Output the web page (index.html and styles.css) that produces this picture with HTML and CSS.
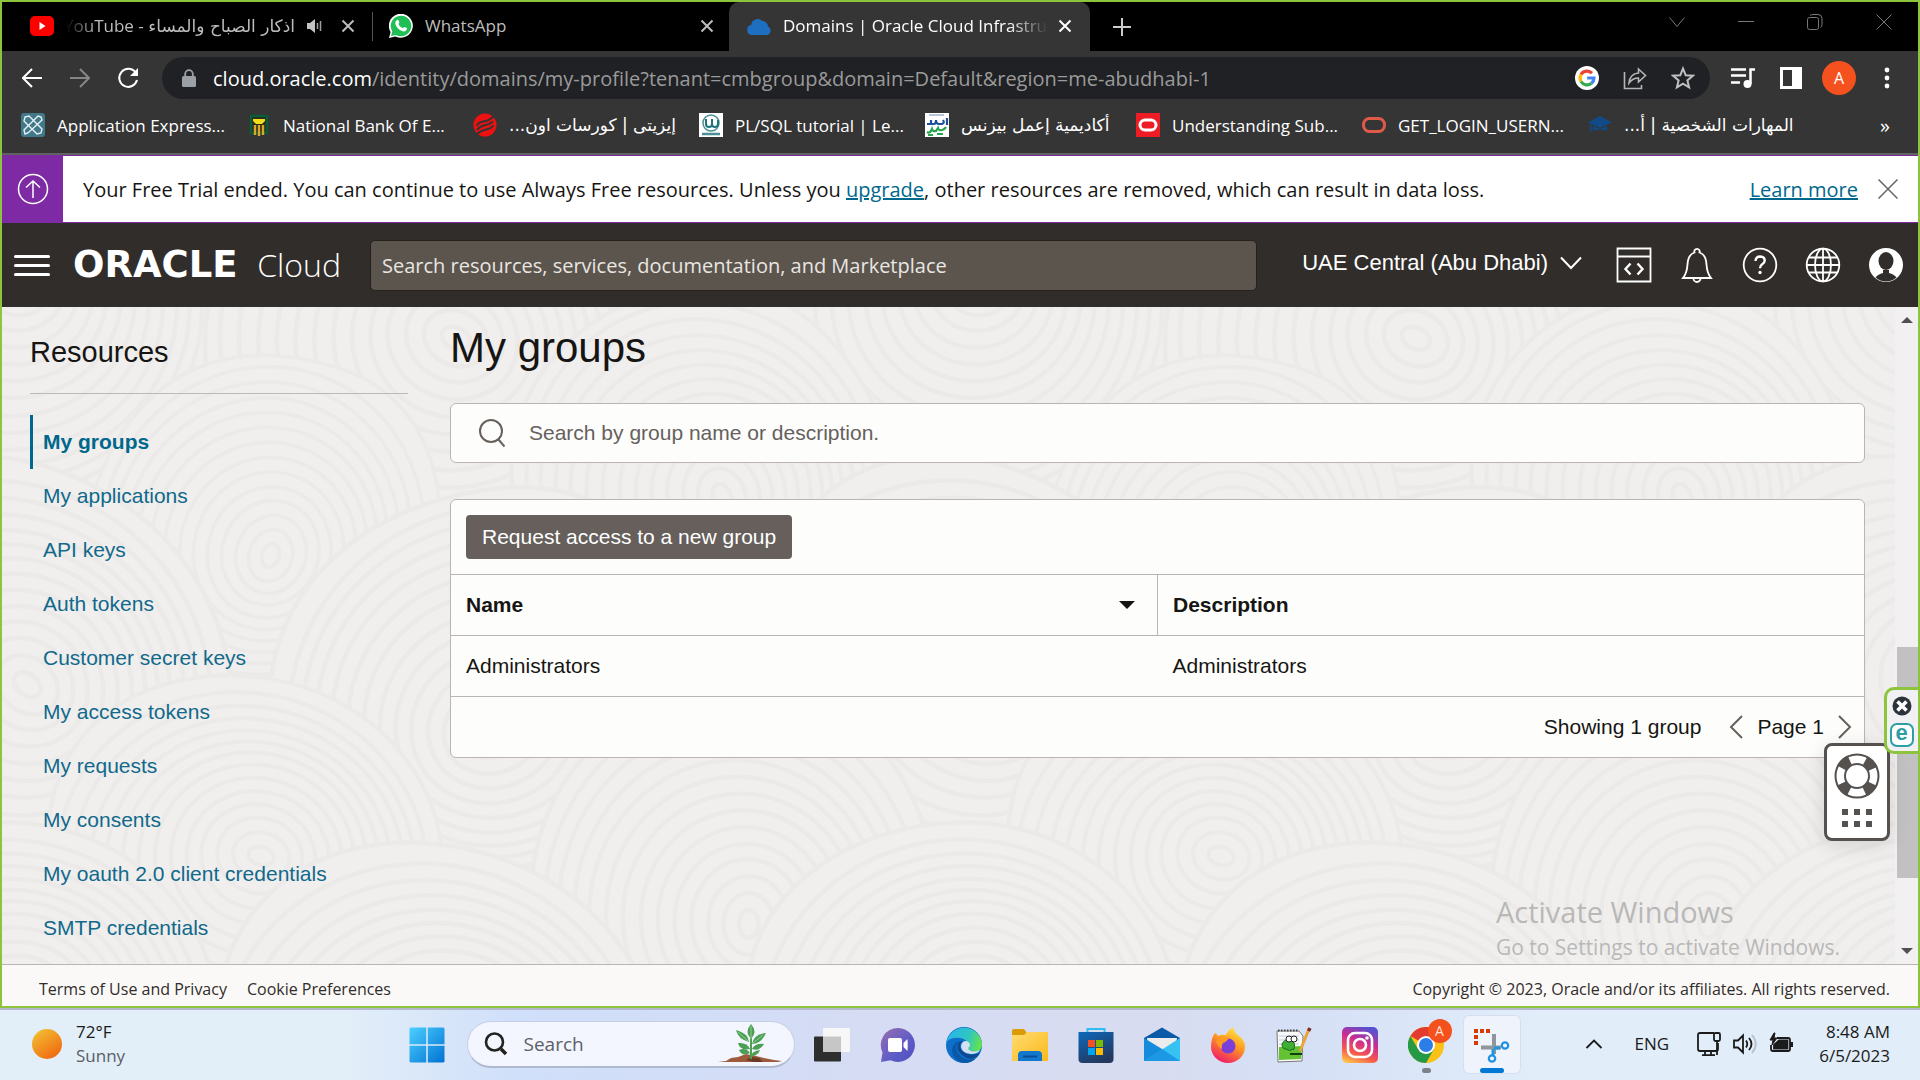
FILE: index.html
```html
<!DOCTYPE html>
<html lang="en">
<head>
<meta charset="utf-8">
<meta name="viewport" content="width=device-width, initial-scale=1">
<title>Domains | Oracle Cloud Infrastructure</title>
<link rel="stylesheet" href="styles.css">
</head>
<body>
<div class="browser">
  <div class="tab-strip">
    <div class="tab">
      <svg class="favicon" viewBox="0 0 24 24"><rect x="0" y="2" width="24" height="20" rx="5" fill="#f00"/><path d="M9.500 8l6 4-6 4z" fill="#fff"/></svg>
      <span class="tab-title tab-title-rtl" dir="rtl"><span class="arabic">اذكار الصباح والمساء</span> - YouTube</span>
      <svg class="tab-sound" viewBox="0 0 16 16"><path d="M0 5h3l5-4v14l-5-4H0z" fill="#c4c4c4"/><path d="M10.500 5v6M13.500 3v10" stroke="#a0a0a0" stroke-width="1.500"/></svg>
      <button class="tab-close" aria-label="Close tab"><svg viewBox="0 0 14 14"><path d="M1.500 1.500l11 11M12.500 1.500l-11 11"/></svg></button>
    </div>
    <div class="tab tab-second">
      <svg class="favicon" viewBox="0 0 24 24"><path d="M0 24l1.600-6A12 12 0 1 1 6.500 22.500z" fill="#fff"/><path d="M2 22l1.300-4.500A10.300 10.300 0 1 1 7 21z" fill="#1fbf55"/><path d="M8 6c1-.6 1.600 0 2.300 2.300.3.900-.9 1.300-.7 1.900.8 1.700 2.200 3 4 3.800.7.200 1.200-1.300 1.900-1.100l2.300 1.200c.8.500-.3 3.200-2.500 3.300C11 17.500 6.300 12.500 6.300 9c0-1.500.9-2.500 1.700-3z" fill="#fff"/></svg>
      <span class="tab-title">WhatsApp</span>
      <button class="tab-close" aria-label="Close tab"><svg viewBox="0 0 14 14"><path d="M1.500 1.500l11 11M12.500 1.500l-11 11"/></svg></button>
    </div>
    <div class="tab tab-active">
      <svg class="favicon" viewBox="0 0 24 24"><path d="M5 21a5 5 0 0 1-.8-9.900A6.500 6.500 0 0 1 15 6.800a6 6 0 0 1 6 5.700A4.500 4.500 0 0 1 20 21z" fill="#1f6fc0"/></svg>
      <span class="tab-title tab-title-fade">Domains | Oracle Cloud Infrastruc</span>
      <button class="tab-close" aria-label="Close tab"><svg viewBox="0 0 14 14"><path d="M1.500 1.500l11 11M12.500 1.500l-11 11"/></svg></button>
    </div>
    <button class="new-tab" aria-label="New tab"><svg viewBox="0 0 18 18"><path d="M9 0v18M0 9h18"/></svg></button>
    <div class="window-controls">
      <button aria-label="Search tabs"><svg viewBox="0 0 16 16"><path d="M.5 3.500l7.500 9 7.500-9"/></svg></button>
      <button aria-label="Minimize"><svg viewBox="0 0 16 16"><path d="M0 7.500h16"/></svg></button>
      <button aria-label="Restore"><svg viewBox="0 0 16 16"><rect x=".5" y="3.500" width="11" height="12" rx="2"/><path d="M3 1.500Q4 .5 6 .5h5q4 0 4 4v6q0 2-1.500 3"/></svg></button>
      <button aria-label="Close"><svg viewBox="0 0 16 16"><path d="M.5.5l15 15M15.500.5l-15 15"/></svg></button>
    </div>
  </div>

  <div class="toolbar">
    <button class="nav-button" aria-label="Back"><svg viewBox="0 0 20 20"><path d="M20 10H2M10 1l-9 9 9 9"/></svg></button>
    <button class="nav-button nav-disabled" aria-label="Forward"><svg viewBox="0 0 20 20"><path d="M0 10h18M10 1l9 9-9 9"/></svg></button>
    <button class="nav-button nav-reload" aria-label="Reload"><svg viewBox="0 0 22 22"><path d="M18.500 5.500A9 9 0 1 0 20 13"/><path d="M21 1v8h-8z" fill="#fff" stroke="none"/></svg></button>
    <div class="address">
      <svg class="lock" viewBox="0 0 14 18"><rect y="7" width="14" height="11" rx="1.500" fill="#9aa0a6"/><path d="M3.200 8V5a3.800 3.800 0 0 1 7.600 0v3" fill="none" stroke="#9aa0a6" stroke-width="1.800"/></svg>
      <div class="url"><span class="url-host">cloud.oracle.com</span>/identity/domains/my-profile?tenant=cmbgroup&amp;domain=Default&amp;region=me-abudhabi-1</div>
      <svg class="address-icon" viewBox="0 0 24 24"><circle cx="12" cy="12" r="12" fill="#fff"/><g fill="none" stroke-width="3.200"><path d="M6 8.500A7 7 0 0 1 17 7.200" stroke="#ea4335"/><path d="M6 15.500a7.500 7.500 0 0 1 0-7" stroke="#fbbc05"/><path d="M16.500 17.300A7 7 0 0 1 6 15.500" stroke="#34a853"/><path d="M12.200 12H19a7 7 0 0 1-2.500 5.300" stroke="#4285f4"/></g></svg>
      <svg class="address-icon" viewBox="0 0 24 24"><path d="M1.500 6v16.500h17V19" fill="none" stroke="#b5b5b5" stroke-width="1.600"/><path d="M6 17c.5-6 4-9.500 9.500-10V3l7 6.500-7 6.500v-4c-4 0-7 1.500-9.500 5z" fill="none" stroke="#b5b5b5" stroke-width="1.600"/></svg>
      <svg class="address-icon" viewBox="0 0 24 24"><path d="M12 2.500l2.700 6.700 7.200.5-5.500 4.700 1.700 7-6.100-3.800-6.100 3.800 1.700-7L2.100 9.700l7.200-.5z" fill="none" stroke="#c0c0c0" stroke-width="2"/></svg>
    </div>
    <div class="toolbar-actions">
      <button aria-label="Media controls"><svg viewBox="0 0 24 24"><path d="M0 3.500h15M0 9.500h15M0 16.500h9M19.500 18V3.500H24" fill="none" stroke="#fff" stroke-width="2.500"/><circle cx="16.500" cy="18" r="4" fill="#fff"/></svg></button>
      <button aria-label="Side panel"><svg viewBox="0 0 24 24"><path fill-rule="evenodd" d="M1 1h22v22H1zM4 4v16h9V4z" fill="#fff"/></svg></button>
      <button class="profile" aria-label="Profile">A</button>
      <button aria-label="Menu"><svg viewBox="0 0 24 24" fill="#fff"><circle cx="12" cy="4" r="2.400"/><circle cx="12" cy="12" r="2.400"/><circle cx="12" cy="20" r="2.400"/></svg></button>
    </div>
  </div>

  <nav class="bookmarks" aria-label="Bookmarks">
    <a href="#"><svg viewBox="0 0 24 24"><rect width="24" height="24" rx="3" fill="#41788a"/><g fill="none" stroke="#e8f1f3" stroke-width="1.400"><path d="M4 4l4-1 13 13-1 4-4 1L3 8z"/><path d="M20 4l-3-1L3 17l1 4 3-1L21 7z"/></g></svg><span>Application Express...</span></a>
    <a href="#"><svg viewBox="0 0 24 24"><rect x="4" y="3" width="16" height="17" fill="#2d2d1c" stroke="#0a5b37" stroke-width="2.500"/><path d="M6 6h12v2l-3 3H9L6 8z" fill="#f2dc1b"/><path d="M8 12v10M12 12v11M16 12v10" stroke="#dba72b" stroke-width="2.400"/></svg><span>National Bank Of E...</span></a>
    <a href="#"><svg viewBox="0 0 24 24"><circle cx="12" cy="12" r="11.500" fill="#ed1111"/><path d="M21 3Q16 8 10 8.500 4 10 4 13M20 8.500Q16 12 11 12.500 6 14 4 17M20 12Q20 15 13 16.500 7 18 4 21" fill="none" stroke="#343434" stroke-width="2"/></svg><span class="arabic" dir="rtl">إيزيتى | كورسات اون...</span></a>
    <a href="#"><svg viewBox="0 0 24 24"><rect width="24" height="24" fill="#fff"/><circle cx="12" cy="10" r="8" fill="none" stroke="#4a8f95" stroke-width="1.500"/><path d="M7 6v5q0 3 3 3t3-3V6v5q0 3 3 3t3-3V7" fill="none" stroke="#22747c" stroke-width="2"/><path d="M3 21h18" stroke="#4a8f95" stroke-width="2.500"/></svg><span>PL/SQL tutorial | Le...</span></a>
    <a class="bookmark-short" href="#"><svg viewBox="0 0 24 24"><rect width="24" height="24" fill="#fff"/><path d="M4 2h15" stroke="#9cb3cf" stroke-width="1.500"/><path d="M2 11h7q2 0 2-4 0 4 3 4h3q3-1 1-4M22 5v7M6 7v3" fill="none" stroke="#1d4f9c" stroke-width="2.200"/><path d="M2 19q3 2 5-3 1 3 4 2l2-3q1 3 4 2t4-3M3 22h5M12 21h6" fill="none" stroke="#25a34f" stroke-width="2.200"/></svg><span class="arabic" dir="rtl">أكاديمية إعمل بيزنس</span></a>
    <a href="#"><svg viewBox="0 0 24 24"><rect width="24" height="24" fill="#ee1c25"/><rect x="4" y="7" width="16" height="10" rx="5" fill="none" stroke="#fff" stroke-width="3"/></svg><span>Understanding Sub...</span></a>
    <a href="#"><svg viewBox="0 0 24 24"><rect x="1.500" y="5.500" width="21" height="13" rx="6" fill="none" stroke="#e05a4a" stroke-width="3"/></svg><span>GET_LOGIN_USERN...</span></a>
    <a href="#"><svg viewBox="0 0 24 24" fill="#114a86"><path d="M12 3L0 9.500 12 15l12-5.500z"/><path d="M5 13v5q7-3 14 0v-5l-7 3zM2 11v8h1.500v-8z"/></svg><span class="arabic" dir="rtl">المهارات الشخصية | أ...</span></a>
    <button class="bookmarks-more" aria-label="More bookmarks">»</button>
  </nav>

  <div class="banner">
    <div class="banner-mark"><svg viewBox="0 0 32 32"><circle cx="16" cy="16" r="14.500"/><path d="M16 25V8M9 14.500L16 8l7 6.500"/></svg></div>
    <p>Your Free Trial ended. You can continue to use Always Free resources. Unless you <a href="#">upgrade</a>, other resources are removed, which can result in data loss.</p>
    <a class="banner-more" href="#">Learn more</a>
    <button class="banner-close" aria-label="Dismiss"><svg viewBox="0 0 20 20"><path d="M.5.5l19 19M19.500.5l-19 19"/></svg></button>
  </div>

  <header class="cloud-header">
    <button class="menu-button" aria-label="Navigation menu"><i></i><i></i><i></i></button>
    <a class="logo" href="#"><b>ORACLE</b><span>Cloud</span></a>
    <input class="global-search" type="search" aria-label="Search resources" placeholder="Search resources, services, documentation, and Marketplace">
    <button class="region">UAE Central (Abu Dhabi)<svg viewBox="0 0 22 14"><path d="M1 1.500l10 10.500L21 1.500"/></svg></button>
    <div class="header-icons">
      <button aria-label="Developer tools"><svg viewBox="0 0 36 36"><path d="M1.500 1.500h33v33h-33zM1.500 9.500h33"/><path d="M14.500 16.500L9.500 22l5 5.500M21.500 16.500l5 5.500-5 5.500" stroke-width="2.400"/></svg></button>
      <button aria-label="Announcements"><svg viewBox="0 0 36 36"><path d="M4 31q4-5 4.500-13.500Q9 7.500 15.500 5.500a2.700 2.700 0 1 1 5 0q6.500 2 7 12Q28 26 32 31zM14.500 31.500a3.500 3.500 0 0 0 7 0"/></svg></button>
      <button aria-label="Help"><svg viewBox="0 0 36 36"><circle cx="18" cy="18" r="16.300"/><path d="M13.500 14q.3-4.500 4.700-4.500 4.500.2 4.500 4 0 2.300-2.500 3.800-2.200 1.300-2.200 4" stroke-width="2.400"/><circle cx="18" cy="25.500" r="1.700" fill="#fff" stroke="none"/></svg></button>
      <button aria-label="Language"><svg viewBox="0 0 36 36"><circle cx="18" cy="18" r="16.300"/><ellipse cx="18" cy="18" rx="8" ry="16.300"/><path d="M18 2v32M2 18h32M4 10.500h28M4 25.500h28"/></svg></button>
      <button aria-label="Account"><svg viewBox="0 0 36 36"><circle cx="18" cy="18" r="17" fill="#fff" stroke="none"/><ellipse cx="18" cy="14" rx="7.500" ry="9" fill="#312d2a" stroke="none"/><path d="M15 23v3q-5 1-7.500 4.500 4.500 4 10.500 4t10.500-4Q26 27 21 26v-3z" fill="#312d2a" stroke="none"/></svg></button>
    </div>
  </header>

  <div class="viewport">
    <svg class="backdrop" aria-hidden="true">
      <defs>
        <g id="swirl" fill="none" stroke="#ebeae9" stroke-width="3">
          <path fill="#f0efee" d="M-154-10C-160-100-70-150 10-146S160-80 154 10 80 150-10 144-150 80-154-10z"/>
          <ellipse rx="143" ry="134"/><ellipse cx="2" rx="132" ry="124"/><ellipse cx="4" cy="-1" rx="121" ry="114"/><ellipse cx="5" cy="-2" rx="110" ry="104"/><ellipse cx="6" cy="-4" rx="99" ry="94"/><ellipse cx="7" cy="-6" rx="88" ry="84"/><ellipse cx="8" cy="-8" rx="77" ry="73"/><ellipse cx="9" cy="-9" rx="66" ry="62"/><ellipse cx="10" cy="-10" rx="55" ry="51"/><ellipse cx="10" cy="-11" rx="44" ry="40"/><ellipse cx="11" cy="-12" rx="33" ry="29"/><ellipse cx="12" cy="-12" rx="22" ry="18"/><ellipse cx="12" cy="-12" rx="10" ry="7"/>
        </g>
        <pattern id="topography" width="960" height="720" patternUnits="userSpaceOnUse">
          <rect width="960" height="720" fill="#f0efee"/>
          <use href="#swirl" transform="translate(0 0) scale(1.400)"/><use href="#swirl" transform="translate(960 0) scale(1.400)"/>
          <use href="#swirl" transform="translate(430 40) rotate(25) scale(1.500)"/><use href="#swirl" transform="translate(700 180) rotate(70) scale(1.300)"/>
          <use href="#swirl" transform="translate(260 230) rotate(110) scale(1.200)"/>
          <use href="#swirl" transform="translate(0 380) rotate(40) scale(1.500)"/><use href="#swirl" transform="translate(960 380) rotate(40) scale(1.500)"/>
          <use href="#swirl" transform="translate(500 400) rotate(160) scale(1.500)"/>
          <use href="#swirl" transform="translate(240 560) rotate(15) scale(1.300)"/><use href="#swirl" transform="translate(730 600) rotate(90) scale(1.400)"/>
          <use href="#swirl" transform="translate(0 720) scale(1.400)"/><use href="#swirl" transform="translate(960 720) scale(1.400)"/>
          <use href="#swirl" transform="translate(430 760) rotate(25) scale(1.500)"/>
        </pattern>
      </defs>
      <rect width="100%" height="100%" fill="url(#topography)"/>
    </svg>
    <aside class="sidebar">
      <h2>Resources</h2>
      <nav aria-label="Resources">
        <a class="current" href="#">My groups</a>
        <a href="#">My applications</a>
        <a href="#">API keys</a>
        <a href="#">Auth tokens</a>
        <a href="#">Customer secret keys</a>
        <a href="#">My access tokens</a>
        <a href="#">My requests</a>
        <a href="#">My consents</a>
        <a href="#">My oauth 2.0 client credentials</a>
        <a href="#">SMTP credentials</a>
      </nav>
    </aside>
    <main class="content">
      <h1>My groups</h1>
      <label class="group-search">
        <svg viewBox="0 0 26 32"><circle cx="12" cy="14" r="11"/><path d="M19.500 22.500l6 7"/></svg>
        <input type="search" aria-label="Search groups" placeholder="Search by group name or description.">
      </label>
      <section class="panel">
        <div class="panel-actions"><button class="request-button">Request access to a new group</button></div>
        <table>
          <thead><tr><th scope="col"><div class="sortable">Name<i class="sort-arrow"></i></div></th><th scope="col">Description</th></tr></thead>
          <tbody><tr><td>Administrators</td><td>Administrators</td></tr></tbody>
        </table>
        <div class="pager">
          <span>Showing 1 group</span>
          <div class="pager-nav">
            <button aria-label="Previous page"><svg viewBox="0 0 14 24"><path d="M13 1L2 12l11 11"/></svg></button>
            <span>Page 1</span>
            <button aria-label="Next page"><svg viewBox="0 0 14 24"><path d="M1 1l11 11L1 23"/></svg></button>
          </div>
        </div>
      </section>
    </main>
    <div class="scrollbar" aria-hidden="true"><i class="arrow-up"></i><div class="track"><div class="thumb"></div></div><i class="arrow-down"></i></div>
    <div class="watermark"><strong>Activate Windows</strong><span>Go to Settings to activate Windows.</span></div>
    <button class="support" aria-label="Support">
      <svg viewBox="0 0 46 46"><circle cx="23" cy="23" r="21.500" fill="#fff" stroke="#55514e" stroke-width="2"/><circle cx="23" cy="23" r="17" fill="none" stroke="#55514e" stroke-width="11" stroke-dasharray="11 15.700" stroke-dashoffset="-7.850"/><circle cx="23" cy="23" r="12" fill="#fff" stroke="#55514e" stroke-width="2"/></svg>
      <svg class="grip" viewBox="0 0 30 18" fill="#55514e"><path d="M0 0h6v6H0zM12 0h6v6h-6zM24 0h6v6h-6zM0 12h6v6H0zM12 12h6v6h-6zM24 12h6v6h-6z"/></svg>
    </button>
    <div class="edge-widget">
      <svg viewBox="0 0 24 24"><circle cx="12" cy="12" r="9.500" fill="#2d333b"/><path d="M7.500 7.500l9 9M16.500 7.500l-9 9" stroke="#fff" stroke-width="3.600"/></svg>
      <span class="edge-badge">e</span>
    </div>
  </div>

  <footer class="page-footer">
    <a href="#">Terms of Use and Privacy</a>
    <a href="#">Cookie Preferences</a>
    <span>Copyright © 2023, Oracle and/or its affiliates. All rights reserved.</span>
  </footer>
</div>

<div class="taskbar">
  <div class="weather">
    <svg viewBox="0 0 30 30"><defs><linearGradient id="sun" x1="0" y1="0" x2=".7" y2="1"><stop offset="0" stop-color="#f3c737"/><stop offset="1" stop-color="#f06a10"/></linearGradient></defs><circle cx="15" cy="15" r="15" fill="url(#sun)"/></svg>
    <div><span>72°F</span><span class="weather-note">Sunny</span></div>
  </div>
  <div class="apps">
    <button class="app" aria-label="Start"><svg viewBox="0 0 36 36"><defs><linearGradient id="win" x1="0" y1="0" x2="1" y2="1"><stop offset="0" stop-color="#4cd0ff"/><stop offset="1" stop-color="#0072d3"/></linearGradient></defs><path d="M1.500.5h15.700v16.700H.5V1.500zM18.800.5h15.700l1 1v15.700H18.800zM.5 18.800h16.700v16.700H1.500l-1-1zM18.800 18.800h16.700v15.700l-1 1H18.800z" fill="url(#win)"/></svg></button>
    <label class="task-search">
      <svg class="task-glass" viewBox="0 0 24 24"><circle cx="10.500" cy="10" r="8.500"/><path d="M17 17l5 5" stroke-width="3.600"/></svg>
      <input type="search" aria-label="Search Windows" placeholder="Search">
      <svg class="plant" viewBox="0 0 66 42"><path d="M1 39l8-1 5-3 7-1 8-3 10 2 8 2 10 2 8 1-4 1z" fill="#9b5b3c"/><path d="M34 34l8 1 4 4h-9l-8-2z" fill="#6b3a24"/><path d="M34 36V8" stroke="#4f9e52" stroke-width="2"/><g fill="#4c9f54"><path d="M34 1q-7 8 0 15 7-7 0-15z"/><path d="M19 7q2 9 13 12-1-9-13-12z"/><path d="M49 10q-12 1-14 11 9 0 14-11z"/><path d="M21 20q2 8 12 6-3-7-12-6z"/><path d="M47 21q-9-1-12 5 7 3 12-5zM22 27q3 7 11 3-4-6-11-3zM43 27q-8 1-9 6 7 0 9-6z"/></g><path d="M34 3v13M21 9l10 9M46 12L36 20" stroke="#8fcf8a"/></svg>
    </label>
    <button class="app" aria-label="Task view"><svg viewBox="0 0 36 36"><rect y="9.500" width="27" height="25" rx="1" fill="#2f2e2e"/><rect x="9" y="1" width="27" height="24" rx="1" fill="#f7f7f7"/><path d="M9 9.500h18V25H9z" fill="#c6c6c6"/></svg></button>
    <button class="app" aria-label="Chat"><svg viewBox="0 0 36 36"><defs><linearGradient id="chat" x1="0" y1="0" x2="1" y2="1"><stop offset="0" stop-color="#9a6fae"/><stop offset=".6" stop-color="#5d5bc8"/><stop offset="1" stop-color="#4f50bd"/></linearGradient></defs><path d="M18 1a17 17 0 1 1-7.500 32.300L1 35l1.500-9.500A17 17 0 0 1 18 1z" fill="url(#chat)"/><rect x="8" y="11" width="14" height="14" rx="2" fill="#fff"/><path d="M23.500 16l4-4q.5 6 0 12l-4-4z" fill="#fff"/></svg></button>
    <button class="app" aria-label="Edge"><svg viewBox="0 0 36 36"><defs><linearGradient id="edge" x1="0" y1=".3" x2="1" y2=".5"><stop offset="0" stop-color="#2ab4ea"/><stop offset=".6" stop-color="#2fc6c3"/><stop offset="1" stop-color="#66e34b"/></linearGradient></defs><circle cx="18" cy="18" r="18" fill="#0c6fca"/><path d="M.5 15A18 18 0 0 1 36 17q0 7-7 8-8 .5-8-3 2-2 1.500-4.500Q21 12 14 11 5 10 .5 15z" fill="url(#edge)"/><path d="M13 14q-5 5-1 12 6 9 17 6-4 4-11 4Q6 33 6 22q2-7 7-8z" fill="#0a58a8"/><path d="M17 14q-6 5 0 11 7 5 17 1-7 9-15 4Q9 24 12 16q2-2 5-2z" fill="#0d4891"/><path d="M19 14q5 0 5 5-3 2-1 4 4 3 11 0-2 4-9 4-9-1-10-7 0-5 4-6z" fill="#d6dff3"/></svg></button>
    <button class="app" aria-label="File Explorer"><svg viewBox="0 0 36 36"><defs><linearGradient id="folder" x1="0" y1="0" x2="1" y2="1"><stop offset="0" stop-color="#ffdc72"/><stop offset="1" stop-color="#fbb91b"/></linearGradient></defs><path d="M0 4q0-2 2-2h10l3 4v4H0z" fill="#dc9a06"/><path d="M0 8h12l3-3h21v29H0z" fill="url(#folder)"/><path d="M6 34v-6q0-4 4-4h16q4 0 4 4v6z" fill="#1277cf"/><path d="M11 29.500h14" stroke="#084e93" stroke-width="2"/></svg></button>
    <button class="app" aria-label="Microsoft Store"><svg viewBox="0 0 36 36"><defs><linearGradient id="store" x1="0" y1="0" x2=".5" y2="1"><stop offset="0" stop-color="#0c69bd"/><stop offset="1" stop-color="#24395f"/></linearGradient></defs><path d="M9.500 7V2h17v5" fill="none" stroke="#2ebdf0" stroke-width="2"/><path d="M.5 5h35v27q0 4-4 4h-27q-4 0-4-4z" fill="url(#store)"/><path d="M10 13h7v7h-7z" fill="#f25022"/><path d="M18 13h7v7h-7z" fill="#7fba00"/><path d="M10 21h7v7h-7z" fill="#00a4ef"/><path d="M18 21h7v7h-7z" fill="#ffb900"/></svg></button>
    <button class="app" aria-label="Mail"><svg viewBox="0 0 36 36"><path d="M0 11L18 .500 36 11v5H0z" fill="#0b5aa8"/><path d="M3 11h30l-1 7-14 9L4 18z" fill="#ececec"/><path d="M0 11l18 11v12H0z" fill="#168bdc"/><path d="M36 11L0 34h36z" fill="#36c2f3"/><path d="M18 22l18 12H0z" fill="#1d98e4"/></svg></button>
    <button class="app" aria-label="Firefox"><svg viewBox="0 0 36 36"><defs><linearGradient id="fox" x1=".8" y1="0" x2=".3" y2="1"><stop offset="0" stop-color="#fff04a"/><stop offset=".45" stop-color="#ff9a1f"/><stop offset="1" stop-color="#f0186b"/></linearGradient></defs><path d="M5 6q2 1 3 3 4-2 8-1Q18 3 23 0q1 5 5 8 7 5 7 12A17 16 0 0 1 1 20q0-9 4-14z" fill="url(#fox)"/><circle cx="18" cy="19" r="7.500" fill="#7a3fd8"/><path d="M6 14q5-4 9-3l4-1q-1 4-6 6-2 3-1 6-5-3-6-8z" fill="#ff9a22"/></svg></button>
    <button class="app" aria-label="Notepad++"><svg viewBox="0 0 36 36"><path d="M1 4h22l4 5-1 25-24 1z" fill="#fafafa" stroke="#777"/><path d="M2 3.500h21" stroke="#444" stroke-width="2" stroke-dasharray="1.500 1.500"/><path d="M3 9h20M3 13h20M3 17h20" stroke="#bcd"/><path d="M3 20l23-1-1 13-22 1z" fill="#62c233"/><path d="M6 17q3-6 9-4 5 3 3 9-5 3-8 0-4 0-4-5z" fill="#3fae34" stroke="#176b19"/><circle cx="13" cy="12" r="3" fill="#fff" stroke="#222"/><circle cx="18" cy="12" r="3" fill="#fff" stroke="#222"/><path d="M14 27h12" stroke="#143d12" stroke-width="2"/><path d="M33 2l-9 22" stroke="#e9a43a" stroke-width="3"/><path d="M34 1l-1.500 3" stroke="#7a2f27" stroke-width="3.500"/></svg></button>
    <button class="app" aria-label="Instagram"><svg viewBox="0 0 36 36"><defs><linearGradient id="insta" x1=".2" y1="1" x2=".6" y2="0"><stop offset="0" stop-color="#ffc14a"/><stop offset=".3" stop-color="#f6584c"/><stop offset=".65" stop-color="#cb2c93"/><stop offset="1" stop-color="#5a4fce"/></linearGradient></defs><rect width="36" height="36" rx="5" fill="url(#insta)"/><g fill="none" stroke="#fff" stroke-width="2.600"><rect x="6" y="6" width="24" height="24" rx="7"/><circle cx="18" cy="18" r="6"/></g><circle cx="25" cy="11" r="1.800" fill="#fff"/></svg></button>
    <button class="app app-running" aria-label="Chrome"><svg viewBox="0 0 36 36"><circle cx="18" cy="18" r="18" fill="#fbc116"/><path d="M18 18L2.400 9A18 18 0 0 1 33.600 9z" fill="#e33b2e"/><path d="M2.400 9A18 18 0 0 0 18 36l7.800-13.500L10 22z" fill="#249a46"/><circle cx="18" cy="18" r="9" fill="#fff"/><circle cx="18" cy="18" r="7" fill="#2d7de9"/></svg><span class="app-badge">A</span></button>
    <button class="app app-current" aria-label="Snipping Tool"><svg viewBox="0 0 36 36"><path d="M20 7v20M7 20.500h20" fill="none" stroke="#8f969c" stroke-width="4"/><path d="M2 18V4h16" fill="none" stroke="#d83b01" stroke-width="4" stroke-dasharray="4 2"/><path d="M19 22v6M20 21h6" stroke="#2196e0" stroke-width="3"/><circle cx="18" cy="31.500" r="3.200" fill="none" stroke="#1d93df" stroke-width="2.200"/><circle cx="31" cy="18.500" r="3.200" fill="none" stroke="#1d93df" stroke-width="2.200"/></svg></button>
  </div>
  <div class="tray">
    <button aria-label="Hidden icons"><svg class="tray-chevron" viewBox="0 0 18 12"><path d="M1.500 10L9 2.500 16.500 10"/></svg></button>
    <span class="tray-language">ENG</span>
    <svg class="tray-icon" viewBox="0 0 24 24"><path d="M17 1H3Q1 1 1 3v14q0 2 2 2h16q2 0 2-2v-6M8 19v4M14 19v4M5 23.200h13"/><rect x="17" y="1" width="6" height="8" rx="1.500"/><path d="M20 9v14"/></svg>
    <svg class="tray-icon" viewBox="0 0 24 24"><path d="M1 8.500v7h4l5 5v-17l-5 5z"/><path d="M13 8.500q2.500 3.500 0 7M16 6q5 6 0 12"/><path d="M19 3q7.500 9 0 18" stroke="#b9c1ca"/></svg>
    <svg class="tray-icon" viewBox="0 0 24 24"><path d="M8 6h11q2 0 2 2v9q0 2-2 2H4q-2 0-2-2v-4"/><path d="M10 8.500h8.500v8H5V13z" fill="#1b1b1b"/><path d="M22.500 10v5" stroke-width="3"/><path d="M5 1L1 8h3l-1 5 5-7H5l1-5z" fill="#1b1b1b" stroke-width="1"/></svg>
    <div class="clock"><span>8:48 AM</span><span>6/5/2023</span></div>
  </div>
</div>
</body>
</html>
```
FILE: styles.css
```css
:root {
  --ui: "Open Sans", "Noto Sans", "DejaVu Sans", sans-serif;
  --page: "Liberation Sans", Arial, sans-serif;
  --green: #8cc43d;
  --line: #bab5af;
  --link: #00688c;
}

* { box-sizing: border-box; }

body {
  margin: 0;
  min-height: 100vh;
  display: flex;
  flex-direction: column;
  font-family: var(--ui);
  color: #161513;
}

button {
  padding: 0;
  border: 0;
  background: none;
  color: inherit;
  font: inherit;
  display: flex;
  align-items: center;
  justify-content: center;
}

input {
  border: 0;
  background: none;
  outline: 0;
  font: inherit;
  min-width: 0;
}

a { text-decoration: none; color: inherit; }
svg { display: block; flex: none; }
.arabic { font-family: "DejaVu Sans", sans-serif; font-size: 17px; }

.browser {
  flex: 1;
  display: flex;
  flex-direction: column;
  border: 2px solid var(--green);
  background: #353535;
}

/* Tabs */
.tab-strip {
  height: 49px;
  display: flex;
  align-items: stretch;
  background: #000;
  color: #bdbdbd;
  font-size: 17px;
}
.tab {
  width: 370px;
  display: flex;
  align-items: center;
  padding: 0 17px 2px 28px;
}
.tab-second {
  width: 357px;
  padding: 0 15px 2px 17px;
  position: relative;
}
.tab-second::before {
  content: "";
  position: absolute;
  left: 0;
  top: 10px;
  bottom: 10px;
  width: 1px;
  background: #555;
}
.tab-active {
  width: 361px;
  padding: 0 18px 2px;
  border-radius: 10px 10px 0 0;
  background: #353535;
  color: #fff;
}
.favicon { width: 24px; height: 24px; margin-right: 12px; }
.tab-title { flex: 1; overflow: hidden; white-space: nowrap; }
.tab-title-rtl { mask-image: linear-gradient(to right, transparent, #000 30px); }
.tab-title-fade { mask-image: linear-gradient(to left, transparent, #000 40px); }
.tab-sound { width: 16px; height: 16px; margin: 0 18px 0 12px; }
.tab-close { margin-left: 10px; }
.tab-sound + .tab-close { margin-left: 0; }
.tab-close svg { width: 14px; height: 14px; fill: none; stroke: currentColor; stroke-width: 2; }
.new-tab { width: 64px; }
.new-tab svg { width: 18px; height: 18px; stroke: #ccc; stroke-width: 2; }
.window-controls { margin-left: auto; height: 40px; display: flex; }
.window-controls button { width: 69px; }
.window-controls svg { width: 16px; height: 16px; fill: none; stroke: #777; }

/* Toolbar */
.toolbar {
  height: 54px;
  display: flex;
  align-items: center;
  padding: 0 19px 0 18px;
}
.nav-button { width: 24px; margin-right: 24px; }
.nav-button svg { width: 20px; height: 20px; fill: none; stroke: #fff; stroke-width: 2; }
.nav-disabled svg { stroke: #868686; }
.nav-reload { margin-right: 22px; }
.nav-reload svg { width: 22px; height: 22px; }
.address {
  flex: 1;
  height: 42px;
  display: flex;
  align-items: center;
  gap: 24px;
  padding: 0 15px 0 20px;
  border-radius: 21px;
  background: #202124;
  color: #9a9a9a;
  font-size: 20px;
}
.lock { width: 14px; height: 18px; margin-right: -7px; }
.url { flex: 1; white-space: nowrap; overflow: hidden; }
.url-host { color: #fff; }
.address-icon { width: 24px; height: 24px; }
.toolbar-actions { display: flex; align-items: center; gap: 24px; margin-left: 21px; }
.toolbar-actions svg { width: 24px; height: 24px; }
.toolbar-actions .profile {
  width: 34px;
  height: 34px;
  margin: 0 -5px;
  border-radius: 50%;
  background: #f4511e;
  color: #fff;
  font-size: 16px;
}

.bookmarks {
  height: 50px;
  display: flex;
  align-items: center;
  gap: 24px;
  padding: 0 28px 8px 19px;
  border-bottom: 2px solid #616161;
  color: #fff;
  font-size: 17px;
}
.bookmarks a { width: 202px; display: flex; align-items: center; gap: 12px; white-space: nowrap; }
.bookmarks .bookmark-short { width: 187px; }
.bookmarks svg { width: 24px; height: 24px; }
.bookmarks-more { margin-left: auto; font-size: 20px; }

/* Trial banner */
.banner {
  height: 68px;
  display: flex;
  align-items: center;
  border: solid #7f2aa5;
  border-width: 1px 0;
  background: #fff;
  font-size: 20px;
}
.banner-mark { width: 61px; align-self: stretch; display: grid; place-items: center; background: #7f2aa5; }
.banner-mark svg { width: 32px; height: 32px; fill: none; stroke: #fff; stroke-width: 1.500; }
.banner p { flex: 1; margin: 0 20px; }
.banner a { color: var(--link); text-decoration: underline; }
.banner-close { margin: 0 20px; }
.banner-close svg { width: 20px; height: 20px; stroke: #666; stroke-width: 1.500; }

/* Cloud header */
.cloud-header {
  height: 84px;
  display: flex;
  align-items: center;
  padding: 0 14px 0 12px;
  background: #312d2a;
  color: #fff;
}
.menu-button { width: 36px; flex-direction: column; gap: 6px; }
.menu-button i { width: 36px; height: 3px; border-radius: 2px; background: #fff; }
.logo { width: 320px; display: flex; align-items: center; justify-content: space-between; padding: 0 29px 0 23px; line-height: 36px; }
.logo b { font-family: "DejaVu Sans", sans-serif; font-size: 37px; }
.logo span { font-family: var(--ui); font-weight: 300; font-size: 32px; }
.global-search {
  flex: 1;
  height: 51px;
  padding: 0 11px;
  border: 1px solid #25211f;
  border-radius: 5px;
  background: #5b554e;
  color: #fff;
  font-size: 20px;
}
.global-search::placeholder { color: #e9e6e2; opacity: 1; }
.region { margin: 0 34px 4px 45px; gap: 12px; font-family: var(--page); font-size: 22px; }
.region svg { width: 22px; height: 14px; fill: none; stroke: #fff; stroke-width: 2; }
.header-icons { display: flex; gap: 27px; }
.header-icons svg { width: 36px; height: 36px; fill: none; stroke: #fff; stroke-width: 1.800; }

/* Page */
.viewport {
  flex: 1;
  position: relative;
  display: flex;
  font-family: var(--page);
  font-size: 21px;
  background: #f0efee;
}
.backdrop { position: absolute; inset: 0; width: 100%; height: 100%; }
.sidebar { position: relative; width: 406px; padding-left: 28px; }
.sidebar h2 {
  height: 87px;
  margin: 0 0 21px;
  padding-top: 28px;
  border-bottom: 1px solid #bcb9b6;
  font-size: 29px;
  line-height: 34px;
  font-weight: 400;
}
.sidebar a { height: 54px; display: flex; align-items: center; padding-left: 13px; color: #11698b; }
.sidebar .current { padding-left: 10px; border-left: 3px solid var(--link); color: var(--link); font-weight: 700; }
.content { position: relative; flex: 1; min-width: 0; padding: 0 30px 0 42px; }
.content h1 { height: 96px; margin: 0; padding-top: 17px; font-size: 42px; line-height: 48px; font-weight: 400; }
.group-search {
  height: 60px;
  display: flex;
  align-items: center;
  gap: 22px;
  padding: 0 28px;
  border: 1px solid var(--line);
  border-radius: 6px;
  background: #fdfdfc;
}
.group-search svg { width: 26px; height: 32px; fill: none; stroke: #67605b; stroke-width: 2; }
.group-search input { flex: 1; }
.group-search input::placeholder { color: #66615d; opacity: 1; }
.panel { margin-top: 36px; border: 1px solid var(--line); border-radius: 6px; background: #fdfdfc; }
.panel-actions { padding: 15px; }
.request-button { height: 44px; padding: 0 16px; border-radius: 4px; background: #665f5b; color: #fff; }
.panel table { width: 100%; table-layout: fixed; border-collapse: collapse; }
.panel th, .panel td { height: 61px; padding: 0 15px; border-top: 1px solid var(--line); text-align: left; }
.panel td { height: 60px; }
.panel th + th { border-left: 1px solid var(--line); }
.sortable { display: flex; align-items: center; justify-content: space-between; padding-right: 7px; }
.sort-arrow { border: solid transparent; border-width: 8px 8px 0; border-top-color: #161513; }
.pager { height: 61px; display: flex; align-items: center; justify-content: flex-end; gap: 28px; padding-right: 12px; border-top: 1px solid var(--line); }
.pager-nav { display: flex; align-items: center; gap: 14px; }
.pager svg { width: 14px; height: 24px; fill: none; stroke: #67605b; stroke-width: 2; }

.scrollbar { position: relative; width: 23px; display: flex; flex-direction: column; align-items: center; padding: 10px 0; background: #f1f1f1; }
.scrollbar .track { flex: 1; width: 21px; align-self: flex-end; display: flex; flex-direction: column; padding-top: 324px; }
.thumb { height: 231px; background: #c1c1c1; }
.arrow-up, .arrow-down { border: 6px solid transparent; }
.arrow-up { border-top: 0; border-bottom-color: #505050; }
.arrow-down { border-bottom: 0; border-top-color: #505050; }

.watermark {
  position: absolute;
  right: 78px;
  bottom: 1px;
  display: flex;
  flex-direction: column;
  color: #b9b8b7;
  font-family: var(--ui);
  font-size: 21px;
  line-height: 32px;
}
.watermark strong { font-size: 29px; font-weight: 400; line-height: 38px; }
.support {
  position: absolute;
  right: 28px;
  bottom: 123px;
  width: 66px;
  height: 98px;
  flex-direction: column;
  gap: 10px;
  padding-bottom: 4px;
  border: 3px solid #55514e;
  border-radius: 8px;
  background: #fff;
  box-shadow: 0 4px 20px rgba(0, 0, 0, .12);
}
.support svg { width: 46px; height: 46px; }
.support .grip { width: 30px; height: 18px; }
.edge-widget {
  position: absolute;
  right: 0;
  bottom: 210px;
  width: 34px;
  height: 67px;
  display: flex;
  flex-direction: column;
  align-items: center;
  justify-content: center;
  gap: 5px;
  padding-right: 2px;
  border: 3px solid var(--green);
  border-right: 0;
  border-radius: 10px 0 0 10px;
  background: #f1f1f3;
}
.edge-widget svg { width: 24px; height: 24px; }
.edge-badge {
  width: 24px;
  height: 24px;
  border: 2px solid #2f9da4;
  border-radius: 7px;
  background: #fff;
  color: #2f9da4;
  font: 700 22px/16px var(--page);
  text-align: center;
}

.page-footer {
  height: 42px;
  display: flex;
  align-items: center;
  gap: 20px;
  padding: 6px 28px 0 37px;
  border-top: 1px solid var(--line);
  background: #fbf9f8;
  color: #312d2a;
  font-size: 16px;
}
.page-footer span { margin-left: auto; }

/* Windows taskbar */
.taskbar {
  height: 72px;
  display: grid;
  grid-template-columns: 1fr auto 1fr;
  align-items: center;
  border-top: 2px solid #b3b9cb;
  background: linear-gradient(90deg, #e2eef8 0 18%, #d0dffa 27%, #d5dcf4 45%, #d8dcf0 60%, #d5e0f6 68%, #e1edf9 80%);
  color: #1b1b1b;
  font-size: 17px;
  line-height: 24px;
}
.weather { display: flex; align-items: center; gap: 14px; padding: 0 0 2px 32px; }
.weather svg { width: 30px; height: 30px; }
.weather div, .clock { display: flex; flex-direction: column; }
.weather-note { color: #5a5f66; }
.apps { display: flex; align-items: center; gap: 10px; padding: 0 2px 1px 0; }
.app { position: relative; width: 56px; height: 57px; border-radius: 5px; }
.app svg { width: 36px; height: 36px; }
.task-search {
  width: 328px;
  height: 47px;
  display: flex;
  align-items: center;
  gap: 14px;
  margin-left: 2px;
  padding: 0 11px 0 16px;
  border: 1px solid #c5cfe6;
  border-bottom: 2px solid #afb9d0;
  border-radius: 24px;
  background: #f3f6fe;
  font-size: 19px;
}
.task-search + .app { margin-left: -1px; }
.task-search input { flex: 1; }
.task-search input::placeholder { color: #5b6068; opacity: 1; }
.task-glass { width: 24px; height: 24px; fill: none; stroke: #222; stroke-width: 2.600; }
.plant { width: 66px; height: 42px; }
.app-running::after, .app-current::after {
  content: "";
  position: absolute;
  bottom: 0;
  left: 24px;
  width: 9px;
  height: 5px;
  border-radius: 3px;
  background: #7c828c;
}
.app-current { background: #eef3fc; box-shadow: 0 0 0 1px #d5dff0; }
.app-current::after { left: 16px; width: 24px; background: #0078d4; }
.app-badge {
  position: absolute;
  top: 3px;
  right: 2px;
  width: 24px;
  height: 24px;
  border-radius: 50%;
  background: #f4511e;
  color: #ffe0d4;
  font-size: 14px;
}
.tray { display: flex; align-items: center; justify-content: flex-end; gap: 12px; padding: 0 30px 2px 0; }
.tray svg { fill: none; stroke: #1b1b1b; stroke-width: 1.800; }
.tray-chevron { width: 18px; height: 12px; }
.tray-language { margin: 0 16px 0 20px; }
.tray-icon { width: 24px; height: 24px; }
.clock { text-align: right; margin-left: 14px; }
```
